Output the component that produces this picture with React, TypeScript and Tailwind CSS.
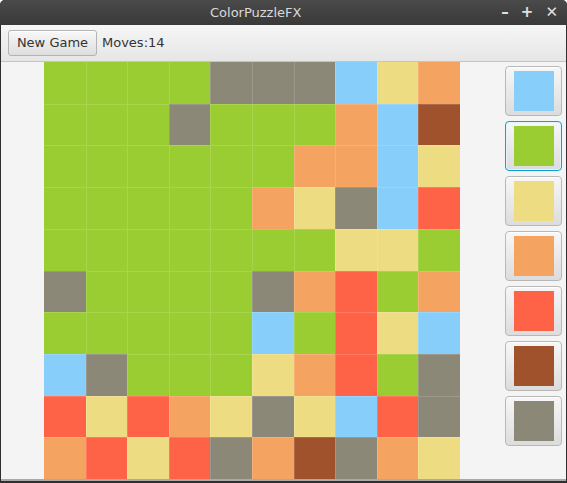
const G = "#9ACD32";
const Y = "#EEDC82";
const O = "#F4A460";
const R = "#FF6347";
const B = "#87CEFA";
const N = "#8B8878";
const S = "#A0522D";

const board: string[][] = [
  [G, G, G, G, N, N, N, B, Y, O],
  [G, G, G, N, G, G, G, O, B, S],
  [G, G, G, G, G, G, O, O, B, Y],
  [G, G, G, G, G, O, Y, N, B, R],
  [G, G, G, G, G, G, G, Y, Y, G],
  [N, G, G, G, G, N, O, R, G, O],
  [G, G, G, G, G, B, G, R, Y, B],
  [B, N, G, G, G, Y, O, R, G, N],
  [R, Y, R, O, Y, N, Y, B, R, N],
  [O, R, Y, R, N, O, S, N, O, Y],
];

const palette = [B, G, Y, O, R, S, N];

function ColorButton({ color, focused }: { color: string; focused?: boolean }) {
  return (
    <button
      className={
        "flex h-[50px] w-[57px] items-center justify-center rounded-[4px] border bg-gradient-to-b from-[#f7f7f7] to-[#dcdcdc] " +
        (focused
          ? "border-[#0aa3d8] shadow-[inset_0_0_0_1px_#e4f4fb]"
          : "border-[#b8b8b8] shadow-[inset_0_1px_0_#ffffff]")
      }
    >
      <div className="h-[40px] w-[40px]" style={{ backgroundColor: color }} />
    </button>
  );
}

export default function App() {
  return (
    <div
      className="w-[567px] h-[483px] bg-white"
      style={{ fontFamily: '"DejaVu Sans", sans-serif' }}
    >
      <div className="flex h-full w-full flex-col overflow-hidden rounded-t-[5px] bg-[#2f2f2f]">
        {/* title bar */}
        <div className="flex h-[25px] shrink-0 items-center bg-gradient-to-b from-[#4a4a4a] to-[#393939] text-[13px] text-[#dadada]">
          <span className="pl-[210px]">ColorPuzzleFX</span>
          <div className="ml-auto flex items-center gap-[12px] pr-[9px] text-[15px] font-bold text-[#e0e0e0]">
            <span className="leading-none">–</span>
            <span className="leading-none">+</span>
            <span className="leading-none">✕</span>
          </div>
        </div>

        {/* window body */}
        <div className="mx-px flex flex-1 flex-col bg-[#f4f4f4]">
          {/* toolbar */}
          <div className="flex h-[37px] shrink-0 items-center gap-[5px] border-b border-[#c4c4c4] bg-gradient-to-b from-[#f6f6f6] to-[#e6e6e6] pl-[7px] text-[13px] text-[#333333]">
            <button className="h-[26px] w-[89px] rounded-[3px] border border-[#b3b3b3] bg-gradient-to-b from-[#f8f8f8] to-[#dedede] text-[13px] text-[#333333] shadow-[inset_0_1px_0_#ffffff]">
              New Game
            </button>
            <span>Moves:14</span>
          </div>

          {/* content */}
          <div className="flex flex-1 border-b-2 border-[#a9a9a9]">
            <div className="ml-[43px] grid h-[417px] w-[416px] grid-cols-10 grid-rows-10">
              {board.map((row, r) =>
                row.map((c, i) => (
                  <div
                    key={r + "-" + i}
                    className={
                      (r > 0 ? "border-t " : "") +
                      (i > 0 ? "border-l " : "") +
                      "border-white/15"
                    }
                    style={{ backgroundColor: c }}
                  />
                ))
              )}
            </div>
            <div className="ml-[45px] flex flex-col gap-[5px] pt-[4px]">
              {palette.map((c, i) => (
                <ColorButton key={i} color={c} focused={i === 1} />
              ))}
            </div>
          </div>
        </div>
        <div className="h-[2px] shrink-0" />
      </div>
    </div>
  );
}
